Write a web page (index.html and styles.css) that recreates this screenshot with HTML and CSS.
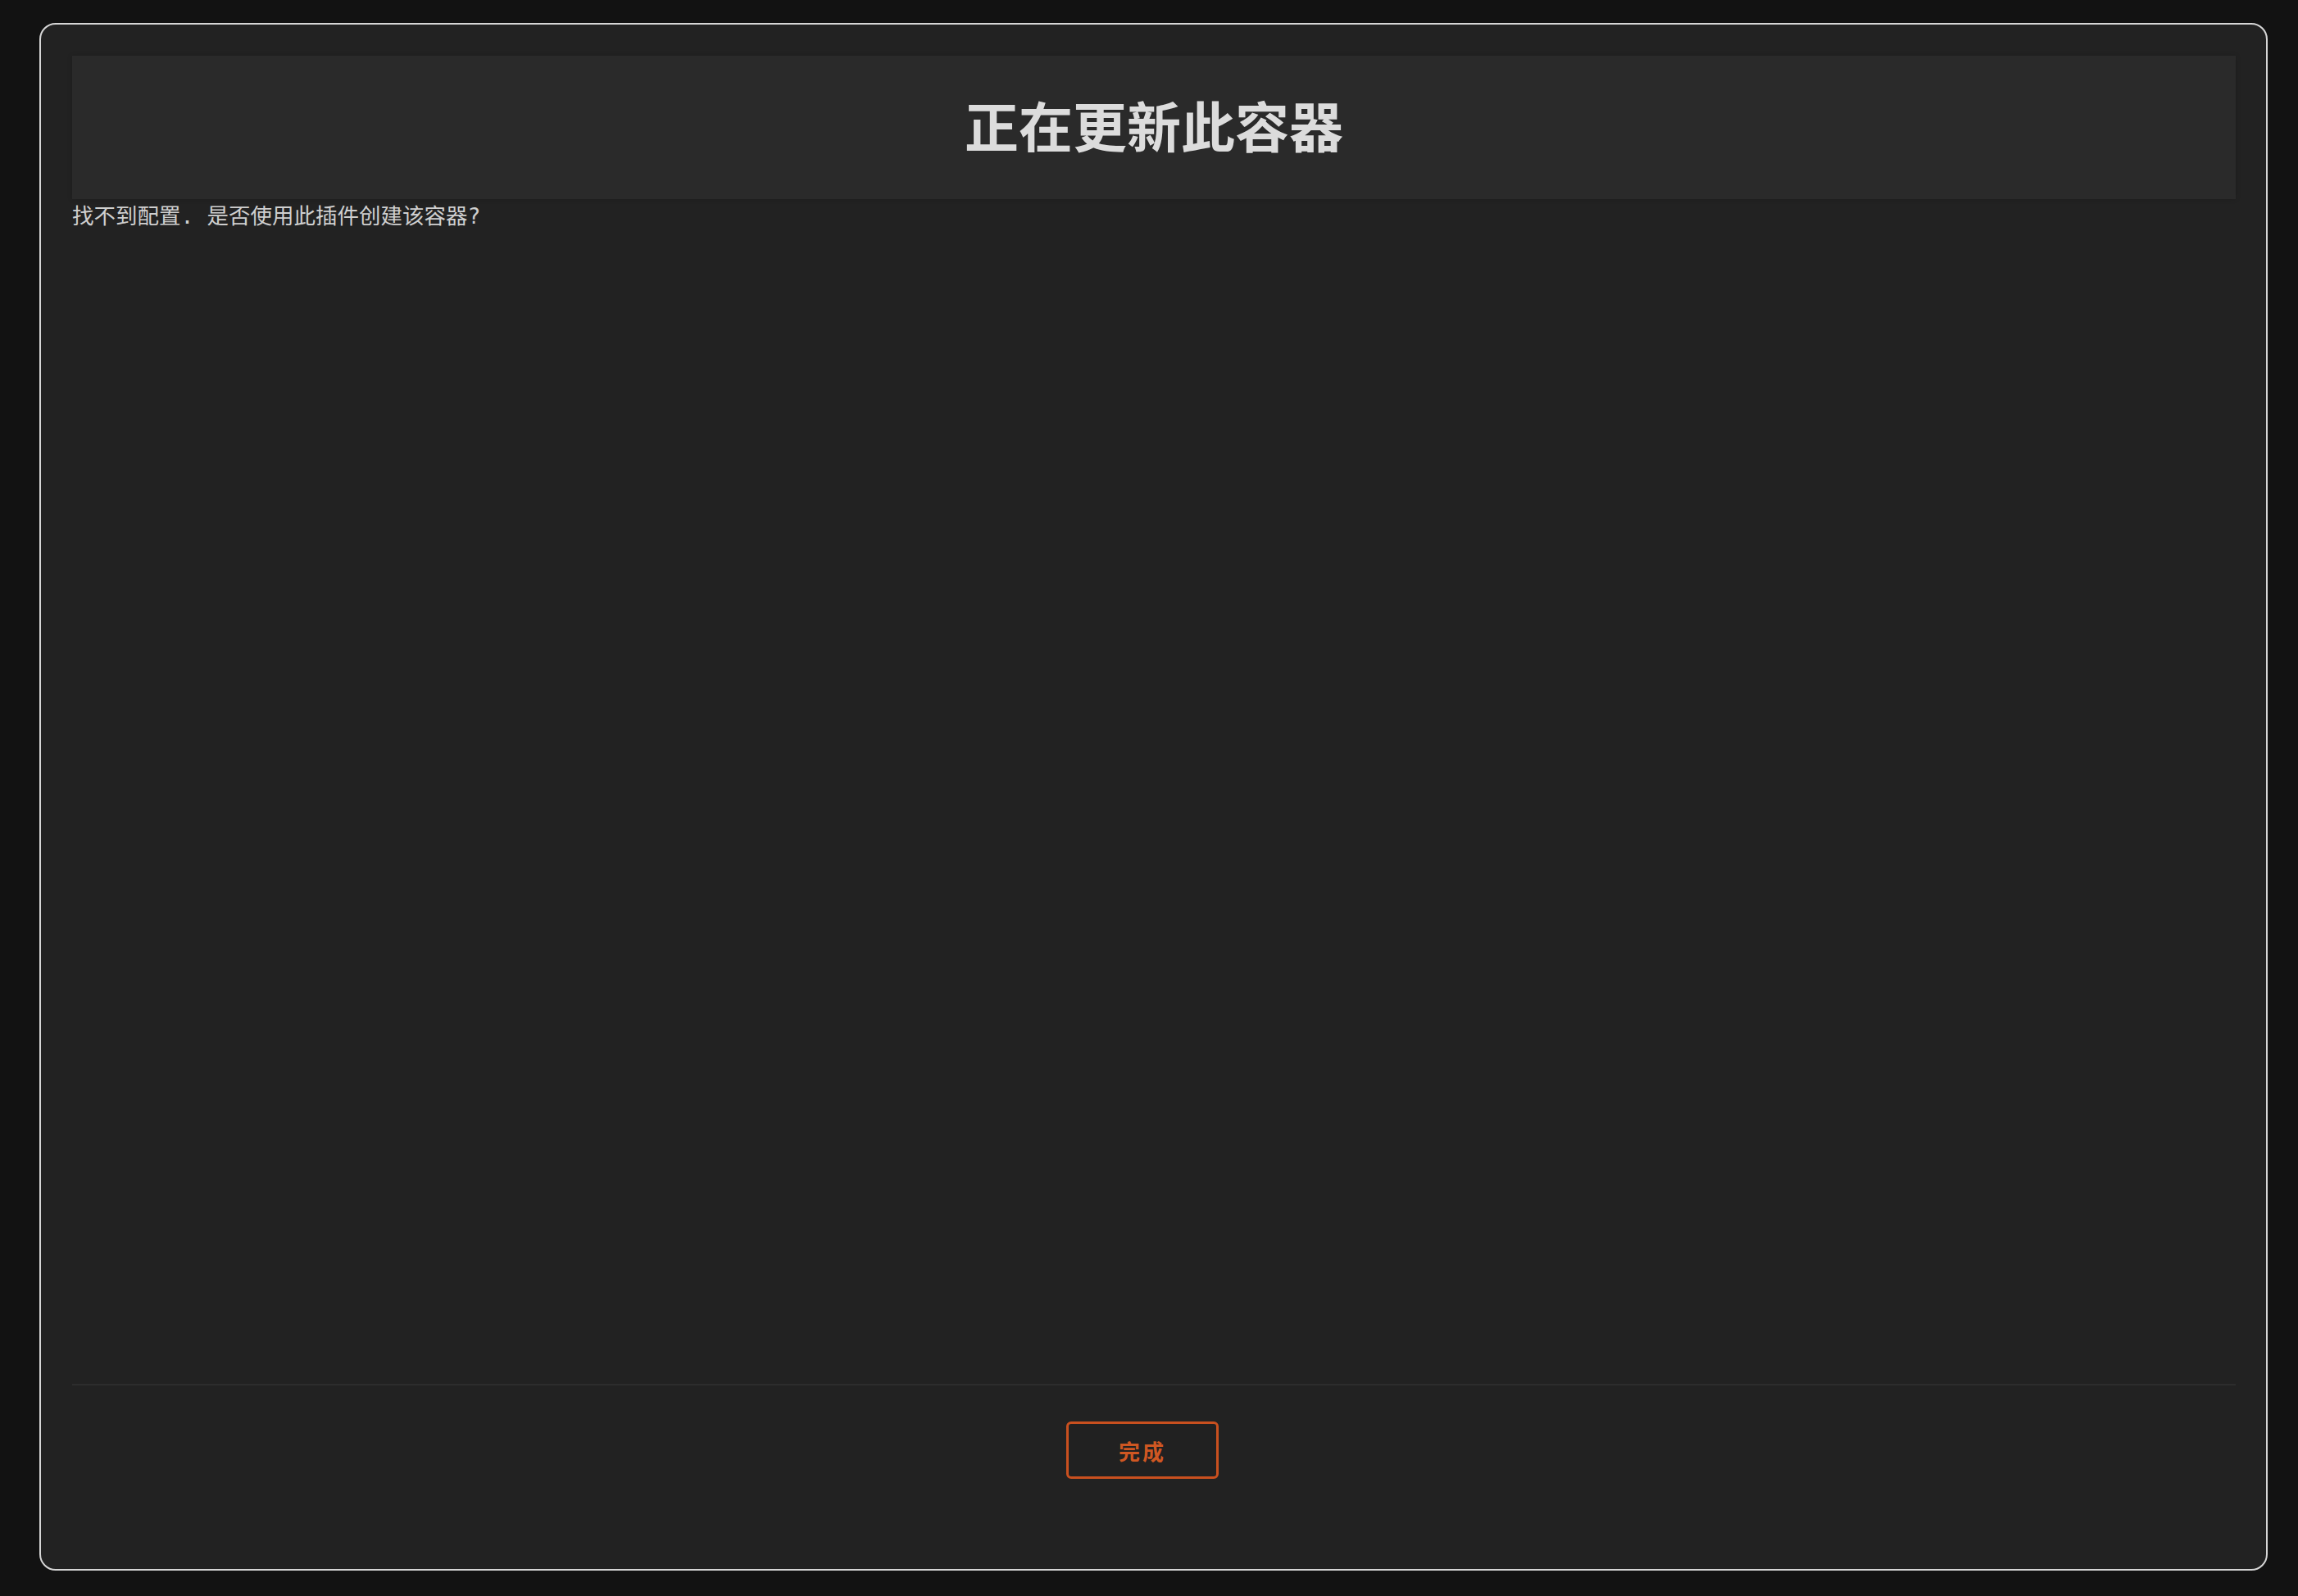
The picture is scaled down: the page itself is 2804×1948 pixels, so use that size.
FILE: index.html
```html
<!DOCTYPE html>
<html lang="zh-CN">
<head>
    <meta charset="UTF-8">
    <meta name="viewport" content="width=device-width, initial-scale=1.0">
    <title>正在更新此容器</title>
    <link rel="stylesheet" href="styles.css">
</head>
<body>
    <div class="dialog">
        <div class="dialog-header">
            <h1 class="dialog-title">正在更新此容器</h1>
        </div>

        <div class="dialog-body">
            <p class="message">找不到配置. 是否使用此插件创建该容器?</p>
        </div>

        <div class="dialog-footer">
            <button class="done-button">完成</button>
        </div>
    </div>
</body>
</html>
```

FILE: styles.css
```css
* {
    box-sizing: border-box;
}

html, body {
    height: 100%;
}

body {
    margin: 0;
    padding: 28px 37px 31px 48px;
    background-color: #121212;
    font-family: "Noto Sans CJK SC", "Noto Sans", sans-serif;
}

.dialog {
    display: flex;
    flex-direction: column;
    height: 100%;
    padding: 38px 37px 38px 38px;
    background-color: #222222;
    border: 2px solid #d6d6d6;
    border-radius: 20px;
}

.dialog-header {
    display: flex;
    align-items: center;
    justify-content: center;
    height: 175px;
    padding-bottom: 10px;
    background-color: #2a2a2a;
    box-shadow: 0 0 6px rgba(0, 0, 0, 0.15);
}

.dialog-title {
    margin: 0;
    font-size: 66px;
    font-weight: 700;
    color: #dcdcdc;
    line-height: 1;
}

.dialog-body {
    flex: 1;
}

.message {
    margin: 4px 0 0;
    font-family: "DejaVu Sans Mono", "Noto Sans CJK SC", monospace;
    font-size: 26.5px;
    line-height: 34px;
    color: #cfcfcf;
}

.dialog-footer {
    display: flex;
    justify-content: center;
    padding: 44px 0 72px;
    border-top: 2px solid #2d2d2d;
}

.done-button {
    width: 186px;
    height: 70px;
    margin-right: 28px;
    padding: 0;
    background-color: #212121;
    border: 3px solid #c9501f;
    border-radius: 6px;
    color: #cf5722;
    font-family: "Noto Sans CJK SC", sans-serif;
    font-size: 26px;
    font-weight: 700;
    letter-spacing: 3px;
    cursor: pointer;
}
```
